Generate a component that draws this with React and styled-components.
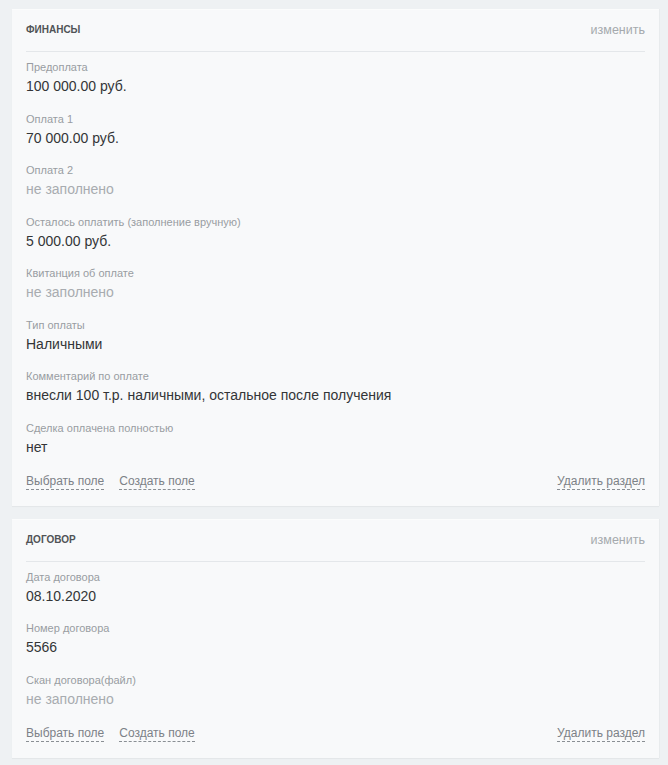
import React from "react";
import styled, { createGlobalStyle } from "styled-components";

const Global = createGlobalStyle`
  html, body { margin: 0; padding: 0; background: #eef1f3; }
  body { font-family: "Liberation Sans", Arial, sans-serif; }
`;

const Page = styled.div`
  padding: 9px 9px 8px 12px;
  display: flex;
  flex-direction: column;
  gap: 13px;
`;

const Card = styled.section`
  background: #f8f9fa;
  border-top: 1px solid #fbfcfc;
  box-shadow: 0 1px 1px rgba(0, 0, 0, 0.04), 1px 0 1px rgba(0, 0, 0, 0.02);
  padding: 0 14px 16px;
`;

const Header = styled.div`
  display: flex;
  justify-content: space-between;
  align-items: center;
  padding: 13px 0 14px;
  border-bottom: 1px solid #e4e7ea;
  height: 14px;
`;

const Title = styled.h2`
  margin: 0;
  font-size: 10px;
  font-weight: 700;
  line-height: 14px;
  color: #505356;
  text-transform: uppercase;
`;

const EditLink = styled.span`
  font-size: 12.5px;
  line-height: 14px;
  color: #a5a9ad;
`;

const Fields = styled.div`
  display: flex;
  flex-direction: column;
  gap: 16.5px;
  padding-top: 8px;
`;

const Field = styled.div`
  display: flex;
  flex-direction: column;
  gap: 3px;
`;

const Label = styled.div`
  font-size: 11px;
  line-height: 14px;
  color: #999da2;
`;

const Value = styled.div`
  font-size: 14px;
  line-height: 18px;
  color: ${(p) => (p.$empty ? "#a8acb0" : "#333537")};
`;

const Footer = styled.div`
  display: flex;
  align-items: center;
  gap: 15px;
  margin-top: 18px;
`;

const DashLink = styled.span`
  font-size: 12px;
  line-height: 15px;
  color: #7c8187;
  border-bottom: 1px dashed #8a8f94;
  margin-left: ${(p) => (p.$push ? "auto" : "0")};
  cursor: pointer;
`;

const sections = [
  {
    title: "Финансы",
    fields: [
      ["Предоплата", "100 000.00 руб."],
      ["Оплата 1", "70 000.00 руб."],
      ["Оплата 2", null],
      ["Осталось оплатить (заполнение вручную)", "5 000.00 руб."],
      ["Квитанция об оплате", null],
      ["Тип оплаты", "Наличными"],
      ["Комментарий по оплате", "внесли 100 т.р. наличными, остальное после получения"],
      ["Сделка оплачена полностью", "нет"],
    ],
  },
  {
    title: "Договор",
    fields: [
      ["Дата договора", "08.10.2020"],
      ["Номер договора", "5566"],
      ["Скан договора(файл)", null],
    ],
  },
];

export default function App() {
  return (
    <>
      <Global />
      <Page>
        {sections.map((s) => (
          <Card key={s.title}>
            <Header>
              <Title>{s.title}</Title>
              <EditLink>изменить</EditLink>
            </Header>
            <Fields>
              {s.fields.map(([label, value]) => (
                <Field key={label}>
                  <Label>{label}</Label>
                  <Value $empty={!value}>{value || "не заполнено"}</Value>
                </Field>
              ))}
            </Fields>
            <Footer>
              <DashLink>Выбрать поле</DashLink>
              <DashLink>Создать поле</DashLink>
              <DashLink $push>Удалить раздел</DashLink>
            </Footer>
          </Card>
        ))}
      </Page>
    </>
  );
}
